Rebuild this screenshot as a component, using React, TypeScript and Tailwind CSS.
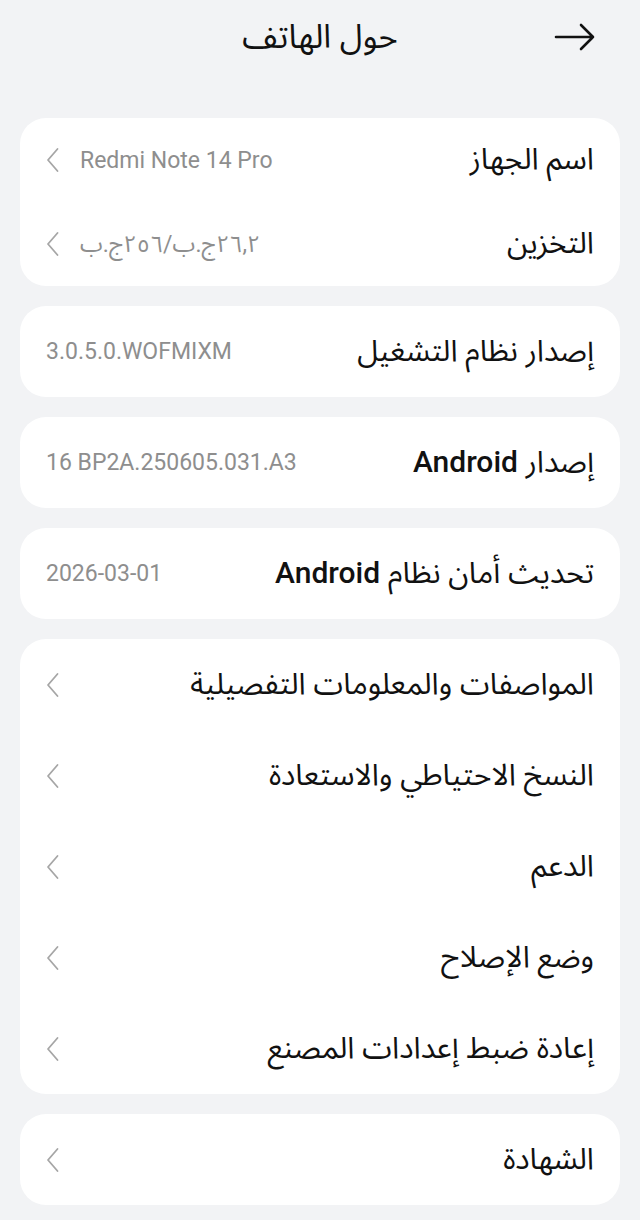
import React from 'react';

const arabic = { fontFamily: '"Noto Sans Arabic", "Noto Sans", "DejaVu Sans", sans-serif' };
const latin = { fontFamily: 'Roboto, "Noto Sans Arabic", "DejaVu Sans", sans-serif' };

const Chevron = () => (
  <svg width="14" height="26" viewBox="0 0 14 26" fill="none" className="shrink-0">
    <path d="M11.5 2 L2 13 L11.5 24" stroke="#a6a6a6" strokeWidth="1.8" strokeLinecap="round" strokeLinejoin="round" />
  </svg>
);

const BackArrow = () => (
  <svg width="42" height="30" viewBox="0 0 42 30" fill="none">
    <path d="M2 15 H39 M27 3 L39 15 L27 27" stroke="#111" strokeWidth="2.6" strokeLinecap="round" strokeLinejoin="round" />
  </svg>
);

interface RowProps {
  label: React.ReactNode;
  value?: string;
  ltr?: boolean;
  chevron?: boolean;
  tall?: boolean;
}

const Row = ({ label, value, ltr = true, chevron, tall = true }: RowProps) => (
  <div className={`flex items-center justify-between px-[26px] ${tall ? 'h-[91px]' : 'h-[84px]'}`}>
    <span className="text-[30px] text-[#111] leading-none" style={arabic}>{label}</span>
    <div className="flex items-center gap-[20px]">
      {value && (
        <span dir={ltr ? 'ltr' : 'rtl'} className="text-[23px] text-[#8e8e8e] leading-none" style={latin}>
          {value}
        </span>
      )}
      {chevron && <Chevron />}
    </div>
  </div>
);

const Card = ({ children }: { children: React.ReactNode }) => (
  <div className="bg-white rounded-[26px] overflow-hidden">{children}</div>
);

const Android = () => <span className="font-medium" style={latin}>Android</span>;

export default function App() {
  return (
    <div dir="rtl" className="w-[640px] h-[1220px] bg-[#f2f3f5] overflow-hidden">
      <div className="relative h-[74px] flex items-center justify-center">
        <h1 className="text-[33px] text-[#111] leading-none" style={arabic}>حول الهاتف</h1>
        <div className="absolute right-[44px] top-[22px]">
          <BackArrow />
        </div>
      </div>

      <div className="flex flex-col gap-[20px] px-[20px] pt-[44px]">
        <Card>
          <Row label="اسم الجهاز" value="Redmi Note 14 Pro" chevron tall={false} />
          <Row label="التخزين" value="٢٦,٢ج.ب/٢٥٦ج.ب" ltr={false} chevron tall={false} />
        </Card>

        <Card>
          <Row label="إصدار نظام التشغيل" value="3.0.5.0.WOFMIXM" />
        </Card>

        <Card>
          <Row label={<>إصدار <Android /></>} value="16 BP2A.250605.031.A3" />
        </Card>

        <Card>
          <Row label={<>تحديث أمان نظام <Android /></>} value="2026-03-01" />
        </Card>

        <Card>
          <Row label="المواصفات والمعلومات التفصيلية" chevron />
          <Row label="النسخ الاحتياطي والاستعادة" chevron />
          <Row label="الدعم" chevron />
          <Row label="وضع الإصلاح" chevron />
          <Row label="إعادة ضبط إعدادات المصنع" chevron />
        </Card>

        <Card>
          <Row label="الشهادة" chevron />
        </Card>
      </div>
    </div>
  );
}
